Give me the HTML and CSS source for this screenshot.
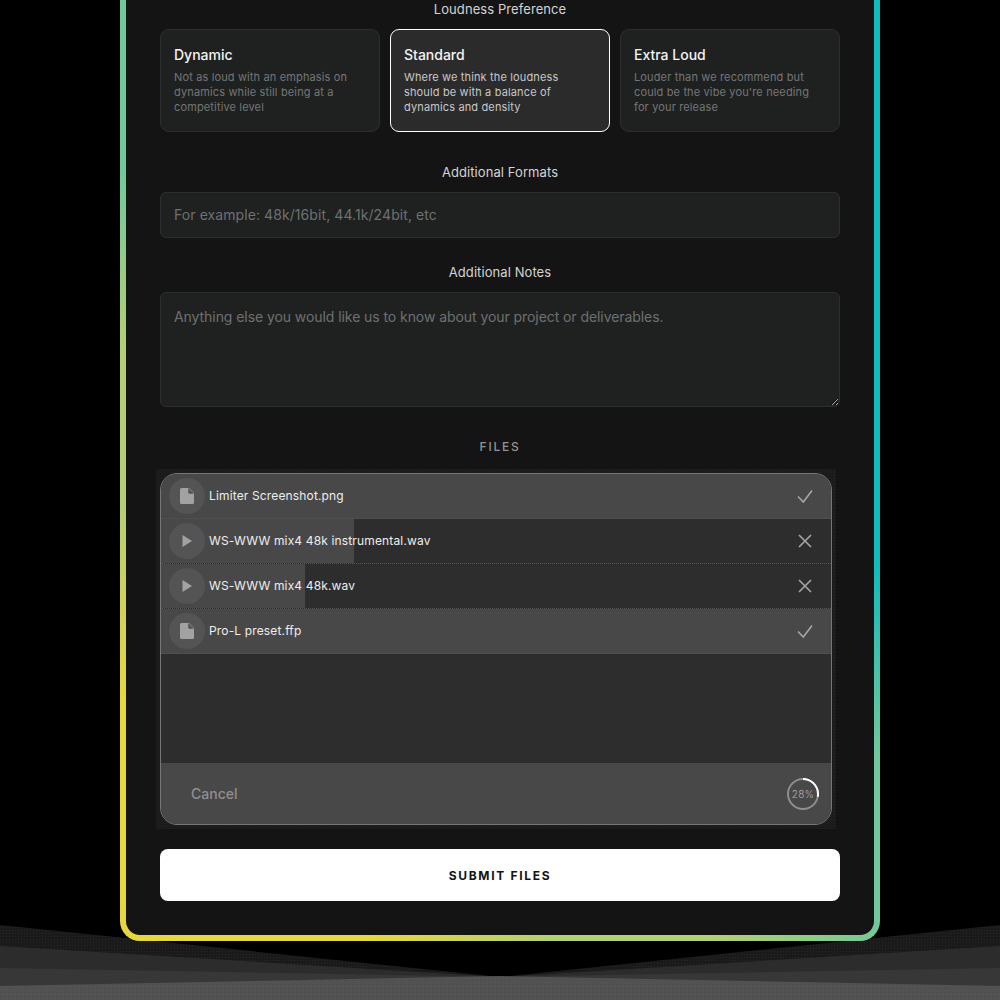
FILE: index.html
```html
<!DOCTYPE html>
<html lang="en">
<head>
<meta charset="utf-8">
<title>Submit Files</title>
<link rel="stylesheet" href="styles.css">
</head>
<body>
<svg class="floor" viewBox="0 0 1000 1000" preserveAspectRatio="none" aria-hidden="true">
  <defs>
    <pattern id="dots-dark" width="3" height="3" patternUnits="userSpaceOnUse">
      <rect class="dots-dark-bg" width="3" height="3"/>
      <rect class="dots-dark-dot" width="1" height="1"/>
    </pattern>
    <pattern id="dots-light" width="4" height="4" patternUnits="userSpaceOnUse">
      <rect class="dots-light-bg" width="4" height="4"/>
      <rect class="dots-light-dot" width="1" height="1"/>
    </pattern>
  </defs>
  <polygon class="band1" points="0,925 500,977 1000,925 1000,1000 0,1000"/>
  <polygon class="band2" points="0,946 500,977 1000,946 1000,1000 0,1000"/>
  <polygon class="band3" points="0,968 500,977 1000,968 1000,1000 0,1000"/>
  <polygon class="band4" points="0,986 500,976 1000,986 1000,1000 0,1000"/>
</svg>
<main class="frame">
  <form class="form">
    <div class="label">Loudness Preference</div>
    <div class="cards section-wide">
      <div class="card">
        <div class="card-title">Dynamic</div>
        <div class="card-text">Not as loud with an emphasis on dynamics while still being at a competitive level</div>
      </div>
      <div class="card card-on">
        <div class="card-title">Standard</div>
        <div class="card-text">Where we think the loudness should be with a balance of dynamics and density</div>
      </div>
      <div class="card">
        <div class="card-title">Extra Loud</div>
        <div class="card-text">Louder than we recommend but could be the vibe you're needing for your release</div>
      </div>
    </div>
    <div class="label">Additional Formats</div>
    <input class="field field-line section-narrow" type="text" placeholder="For example: 48k/16bit, 44.1k/24bit, etc">
    <div class="label">Additional Notes</div>
    <textarea class="field area section-wide" placeholder="Anything else you would like us to know about your project or deliverables."></textarea>
    <div class="label label-caps">FILES</div>
    <div class="drop">
      <div class="uploader">
        <div class="rows">
          <div class="row row-done">
            <span class="badge"><svg viewBox="0 0 16 16" class="i-file"><path d="M2.5 0H10l5 5v9.5a1.5 1.5 0 0 1-1.5 1.5h-11A1.5 1.5 0 0 1 1 14.500v-13A1.500 1.500 0 0 1 2.500 0z"/><path class="fold" d="M9.800 0.500V5.200H14.500"/></svg></span>
            <span class="name">Limiter Screenshot.png</span>
            <svg viewBox="0 0 16 16" class="act"><path d="M1 8.500 6.300 14 15 2.500"/></svg>
          </div>
          <div class="row">
            <span class="fill" style="width:193px"></span>
            <span class="badge"><svg viewBox="0 0 16 16" class="i-play"><path d="M3.500 2 13 8 3.500 14z"/></svg></span>
            <span class="name">WS-WWW mix4 48k instrumental.wav</span>
            <svg viewBox="0 0 16 16" class="act"><path d="M2 2 14 14M14 2 2 14"/></svg>
          </div>
          <div class="row">
            <span class="fill" style="width:144px"></span>
            <span class="badge"><svg viewBox="0 0 16 16" class="i-play"><path d="M3.500 2 13 8 3.500 14z"/></svg></span>
            <span class="name">WS-WWW mix4 48k.wav</span>
            <svg viewBox="0 0 16 16" class="act"><path d="M2 2 14 14M14 2 2 14"/></svg>
          </div>
          <div class="row row-done">
            <span class="badge"><svg viewBox="0 0 16 16" class="i-file"><path d="M2.5 0H10l5 5v9.500a1.500 1.500 0 0 1-1.500 1.500h-11A1.500 1.500 0 0 1 1 14.500v-13A1.500 1.500 0 0 1 2.500 0z"/><path class="fold" d="M9.800 0.500V5.200H14.500"/></svg></span>
            <span class="name">Pro-L preset.ffp</span>
            <svg viewBox="0 0 16 16" class="act"><path d="M1 8.500 6.300 14 15 2.500"/></svg>
          </div>
        </div>
        <div class="bar">
          <span class="cancel">Cancel</span>
          <span class="ring">
            <svg viewBox="0 0 32 32">
              <circle class="ring-bg" cx="16" cy="16" r="15"/>
              <circle class="ring-fg" cx="16" cy="16" r="15" pathLength="100" stroke-dasharray="28 72" transform="rotate(-90 16 16)"/>
            </svg>
            <span class="ring-text">28%</span>
          </span>
        </div>
      </div>
    </div>
    <button class="submit" type="button">SUBMIT FILES</button>
  </form>
</main>
</body>
</html>
```

FILE: styles.css
```css
* { box-sizing: border-box; }
html, body { margin: 0; height: 1000px; overflow: hidden; background: #000; }
body { font-family: Inter, "Liberation Sans", sans-serif; color: #fff; position: relative; }

.floor { position: absolute; inset: 0; width: 1000px; height: 1000px; }
.dots-dark-bg { fill: #1a1a1a; }
.dots-dark-dot { fill: #262626; }
.dots-light-bg { fill: #525252; }
.dots-light-dot { fill: #484848; }
.band1 { fill: url(#dots-dark); }
.band2 { fill: #2c2c2c; }
.band3 { fill: #373737; }
.band4 { fill: url(#dots-light); }

.frame {
  position: relative;
  width: 760px;
  margin: -20px auto 0;
  padding: 6px;
  border-radius: 20px;
  background: linear-gradient(45deg, #e6d640 179px, #b5cf75 308px, #b5cf75 419px, #72c89a 545px, #72c89a 665px, #10bbbb 803px);
}
.form {
  display: flex;
  flex-direction: column;
  padding: 14px 34px 34px;
  background: #141414;
  border-radius: 14px;
}
.label {
  height: 18px;
  line-height: 18px;
  margin-bottom: 11px;
  text-align: center;
  font-size: 13px;
  letter-spacing: 0.08px;
  color: #d4d4d4;
}
.label-caps { margin-bottom: 13px; font-size: 12px; font-weight: 500; letter-spacing: 1.75px; color: #939393; }

.section-wide { margin-bottom: 31px; }
.section-narrow { margin-bottom: 25px; }

.cards { display: grid; grid-template-columns: repeat(3, 1fr); gap: 10px; }
.card {
  height: 103px;
  padding: 16px 13px 0;
  background: #1f2121;
  border: 1px solid #2d2f2f;
  border-radius: 9px;
}
.card-on { background: #2b2b2b; border-color: #fff; }
.card-title { font-size: 14px; line-height: 18px; font-weight: 500; color: #f4f4f4; margin-bottom: 6px; }
.card-text { font-size: 11px; line-height: 15px; letter-spacing: 0.14px; color: #747676; }
.card-on .card-text { color: #c8c8c8; }

.field {
  display: block;
  width: 100%;
  height: 46px;
  padding: 0 13px 2px;
  background: #1f2121;
  border: 1px solid #2d2f2f;
  border-radius: 6px;
  color: #fff;
  font: 14px/20px Inter, "Liberation Sans", sans-serif;
  outline: none;
}
.field::placeholder { color: #6e7070; opacity: 1; }
.field-line { letter-spacing: 0.08px; }
.area { height: 115px; padding: 14px 13px; letter-spacing: -0.07px; resize: vertical; }

.drop {
  width: 680px;
  height: 360px;
  margin-left: -4px;
  margin-bottom: 20px;
  padding: 4px;
  background-color: #1c1e1e;
  background-image: radial-gradient(#141414 0.5px, transparent 0.7px);
  background-size: 3px 3px;
}
.uploader {
  display: flex;
  flex-direction: column;
  justify-content: space-between;
  width: 672px;
  height: 352px;
  background: #2d2d2d;
  border: 1px solid #767676;
  border-radius: 17px;
  overflow: hidden;
}
.rows { display: flex; flex-direction: column; }
.row {
  position: relative;
  display: flex;
  align-items: center;
  height: 45px;
  padding: 0 18px 0 8px;
  border-bottom: 1px dotted #555;
}
.row-done { background: #484848; }
.fill { position: absolute; left: 0; top: 0; bottom: 0; background: #484848; }
.badge {
  position: relative;
  display: flex;
  align-items: center;
  justify-content: center;
  width: 36px;
  height: 36px;
  flex: none;
  border-radius: 50%;
  background: #545454;
}
.i-file { width: 16px; height: 16px; fill: #a2a2a2; }
.i-file .fold { fill: #545454; stroke: #545454; stroke-width: 1; }
.i-play { width: 16px; height: 16px; fill: #a2a2a2; }
.name { position: relative; flex: 1; margin: 0 0 1px 4px; font-size: 12px; letter-spacing: 0.15px; color: #eee; }
.act { position: relative; width: 16px; height: 16px; fill: none; stroke: #a6a6a6; stroke-width: 1.6; }

.bar {
  display: flex;
  align-items: center;
  justify-content: space-between;
  height: 61px;
  padding: 0 12px 0 30px;
  background: #484848;
}
.cancel { font-size: 14px; font-weight: 500; color: #8f8f8f; }
.ring { position: relative; display: block; width: 32px; height: 32px; }
.ring svg { display: block; width: 32px; height: 32px; fill: none; stroke-width: 2; }
.ring-bg { stroke: #8e8e8e; }
.ring-fg { stroke: #fff; }
.ring-text {
  position: absolute;
  inset: 0;
  display: flex;
  align-items: center;
  justify-content: center;
  font-size: 10px;
  font-weight: 300;
  letter-spacing: 0.3px;
  color: #b0b0b0;
}

.submit {
  height: 52px;
  background: #fff;
  border: 0;
  border-radius: 8px;
  color: #141414;
  font: 700 12px Inter, "Liberation Sans", sans-serif;
  letter-spacing: 1.7px;
}
```
